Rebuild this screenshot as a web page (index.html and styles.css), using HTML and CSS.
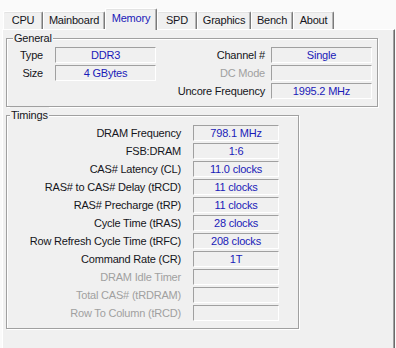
FILE: index.html
```html
<!DOCTYPE html>
<html>
<head>
<meta charset="utf-8">
<link rel="stylesheet" href="styles.css">
</head>
<body>
<div class="win">
  <div class="tabs">
    <div class="tab t-cpu">CPU</div>
    <div class="tab t-main">Mainboard</div>
    <div class="tab t-mem sel">Memory</div>
    <div class="tab t-spd">SPD</div>
    <div class="tab t-gfx">Graphics</div>
    <div class="tab t-bench">Bench</div>
    <div class="tab t-about">About</div>
  </div>
  <div class="panel">
    <div class="group general">
      <span class="legend">General</span>
      <div class="ggrid">
        <span class="lbl l1">Type</span><span class="field">DDR3</span><span class="lbl l2">Channel #</span><span class="field">Single</span>
        <span class="lbl l1">Size</span><span class="field">4 GBytes</span><span class="lbl l2 dis">DC Mode</span><span class="field"></span>
        <span></span><span></span><span class="lbl l2">Uncore Frequency</span><span class="field">1995.2 MHz</span>
      </div>
    </div>
    <div class="group timings">
      <span class="legend">Timings</span>
      <div class="tgrid">
        <span class="lbl">DRAM Frequency</span><span class="field">798.1 MHz</span>
        <span class="lbl">FSB:DRAM</span><span class="field">1:6</span>
        <span class="lbl">CAS# Latency (CL)</span><span class="field">11.0 clocks</span>
        <span class="lbl">RAS# to CAS# Delay (tRCD)</span><span class="field">11 clocks</span>
        <span class="lbl">RAS# Precharge (tRP)</span><span class="field">11 clocks</span>
        <span class="lbl">Cycle Time (tRAS)</span><span class="field">28 clocks</span>
        <span class="lbl">Row Refresh Cycle Time (tRFC)</span><span class="field">208 clocks</span>
        <span class="lbl">Command Rate (CR)</span><span class="field">1T</span>
        <span class="lbl dis">DRAM Idle Timer</span><span class="field"></span>
        <span class="lbl dis">Total CAS# (tRDRAM)</span><span class="field"></span>
        <span class="lbl dis">Row To Column (tRCD)</span><span class="field"></span>
      </div>
    </div>
  </div>
</div>
</body>
</html>
```
FILE: styles.css
```css
html, body {
  margin: 0;
  padding: 0;
}
body {
  width: 396px;
  height: 348px;
  overflow: hidden;
  background: #f0f0f0;
  font-family: "Liberation Sans", Arial, sans-serif;
  font-size: 11px;
  letter-spacing: -0.2px;
  color: #151520;
}
.win {
  background: #fafafa;
  height: 348px;
}
.tabs {
  display: flex;
  align-items: flex-end;
  height: 29px;
  padding-left: 3px;
  box-sizing: border-box;
}
.tab {
  height: 18px;
  box-sizing: border-box;
  border-top: 1px solid #fff;
  border-left: 1px solid #fff;
  border-right: 1px solid #7a7a7a;
  box-shadow: inset -1px 0 0 #b4b4b4, inset 0 1px 0 #e3e3e3;
  background: #f0f0f0;
  text-align: center;
  line-height: 17px;
  border-radius: 2px 2px 0 0;
}
.tab.sel {
  line-height: 19px;
  color: #1a1ab8;
  background: #f0f0f0;
  position: relative;
  z-index: 1;
  margin-bottom: -1px;
  height: 22px;
}
.t-cpu { width: 40px; }
.t-main { width: 62px; }
.t-mem { width: 52px; }
.t-spd { width: 40px; }
.t-gfx { width: 54px; }
.t-bench { width: 42px; }
.t-about { width: 41px; }

.panel {
  margin-left: 2px;
  width: 393px;
  height: 319px;
  box-sizing: border-box;
  background: #f0f0f0;
  border-top: 1px solid #fff;
  border-left: 1px solid #fff;
  border-right: 1px solid #6a6a6a;
  box-shadow: inset -1px 0 0 #a0a0a0;
  padding: 8px 0 0 3px;
}
.group {
  position: relative;
  box-sizing: border-box;
  border: 1px solid #a0a0a0;
  box-shadow: inset 1px 1px 0 #fff, 1px 1px 0 #fff;
}
.legend {
  position: absolute;
  top: -9px;
  background: #f0f0f0;
  line-height: 16px;
  padding: 0 1px;
}
.general {
  width: 372px;
  height: 69px;
  padding: 8px 5px 0 0;
}
.general .legend { left: 6px; }
.timings {
  width: 293px;
  height: 214px;
  margin-top: 8px;
  padding: 9px 19px 0 0;
}
.timings .legend { left: 3px; }
.ggrid {
  display: grid;
  grid-template-columns: 48px 101px 1fr 101px;
  grid-auto-rows: 16px;
  row-gap: 2px;
}
.tgrid {
  display: grid;
  grid-template-columns: 186px 86px;
  grid-auto-rows: 16px;
  row-gap: 2px;
}
.lbl {
  text-align: right;
  line-height: 16px;
  white-space: nowrap;
  padding-right: 12px;
}
.ggrid .l1 { padding-right: 12px; }
.ggrid .l2 { padding-right: 6px; }
.dis { color: #a0a0a0; }
.field {
  box-sizing: border-box;
  border-top: 1px solid #a0a0a0;
  border-left: 1px solid #a0a0a0;
  border-bottom: 1px solid #fff;
  border-right: 1px solid #fff;
  text-align: center;
  line-height: 14px;
  color: #1a1ab8;
  white-space: nowrap;
}
```
